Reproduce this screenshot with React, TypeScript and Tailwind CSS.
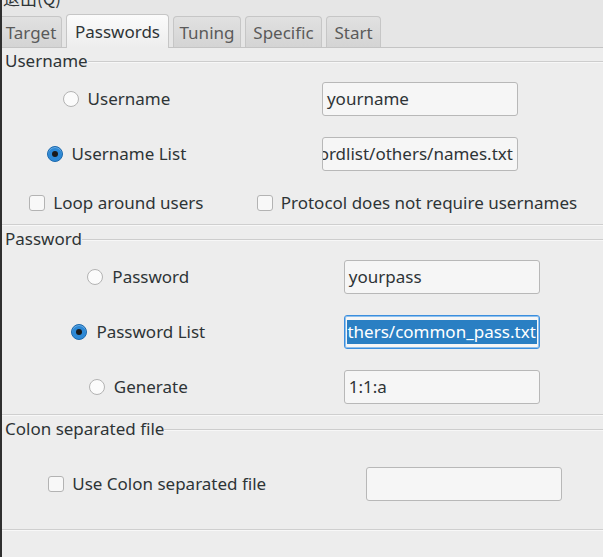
import React from "react";

function Radio({ checked, label }: { checked?: boolean; label: string }) {
  return (
    <div className="flex items-center gap-[9px]">
      {checked ? (
        <span className="w-[16px] h-[16px] rounded-full bg-[#2d89d6] border border-[#1c69ad] flex items-center justify-center shadow-[inset_0_1px_0_rgba(255,255,255,0.3)]">
          <span className="w-[6px] h-[6px] rounded-full bg-[#1a1a1a]" />
        </span>
      ) : (
        <span className="w-[16px] h-[16px] rounded-full bg-[#fbfbfb] border border-[#b3b3b3]" />
      )}
      <span className="text-[#2e3436]">{label}</span>
    </div>
  );
}

function Check({ label }: { label: string }) {
  return (
    <div className="flex items-center gap-[8px]">
      <span className="w-[16px] h-[16px] rounded-[3px] bg-[#f8f8f8] border border-[#b3b3b3]" />
      <span className="text-[#2e3436]">{label}</span>
    </div>
  );
}

function Input({
  value,
  clipLeft,
  selected,
  shift,
}: {
  value?: string;
  clipLeft?: boolean;
  selected?: boolean;
  shift: string;
}) {
  if (selected) {
    return (
      <div
        className={
          "w-[196px] h-[34px] rounded-[3px] border border-[#3b8ede] bg-[#f6f6f6] flex items-center overflow-hidden p-[2px] shadow-[inset_0_0_0_1px_#8fc0ec] " +
          shift
        }
      >
        <div className="h-[24px] w-full bg-[#2a7fc3] flex items-center justify-end overflow-hidden">
          <span className="whitespace-nowrap text-white pr-[1px]">{value}</span>
        </div>
      </div>
    );
  }
  return (
    <div
      className={
        "w-[196px] h-[34px] rounded-[3px] border border-[#b8b8b8] bg-[#f6f6f6] flex items-center overflow-hidden px-[4px] " +
        (clipLeft ? "justify-end " : "justify-start ") +
        shift
      }
    >
      <span className="whitespace-nowrap text-[#2e3436]">{value}</span>
    </div>
  );
}

function Legend({ label }: { label: string }) {
  return (
    <div className="h-[26px] flex items-center">
      <span className="pl-[3px] text-[#2e3436] whitespace-nowrap">{label}</span>
      <div className="flex-1 flex flex-col mt-[2px]">
        <div className="h-px bg-[#cdcdcd]" />
        <div className="h-px bg-[#f7f7f7]" />
      </div>
    </div>
  );
}

function Sep() {
  return (
    <div className="flex flex-col">
      <div className="h-px bg-[#cfcfcf]" />
      <div className="h-px bg-[#f8f8f8]" />
    </div>
  );
}

function Row({ a, b, w1, w2 }: { a: React.ReactNode; b: React.ReactNode; w1: string; w2: string }) {
  return (
    <div className="flex h-[34px] items-center">
      <div className={w1 + " flex justify-center"}>{a}</div>
      <div className={w2 + " flex justify-center"}>{b}</div>
    </div>
  );
}

export default function App() {
  const tabInactive =
    "h-[31px] flex items-center justify-center rounded-t-[4px] border border-b-0 border-[#c6c6c6] bg-gradient-to-b from-[#e1e1e1] to-[#d4d4d4] text-[#5a5a5a]";
  return (
    <div className="w-[603px] h-[557px] flex bg-[#ededed] overflow-hidden font-['Noto_Sans','Noto_Sans_CJK_SC',sans-serif] text-[17px]">
      <div className="w-[2px] h-full bg-[#2f2f2f] shrink-0" />
      <div className="flex-1 flex flex-col overflow-hidden">
        <div className="bg-[#e6e6e6]">
          <div className="h-[14px] overflow-hidden">
            <div className="mt-[-13px] leading-[22px] pl-[1px] text-[#2e3436] font-['Noto_Sans_CJK_SC',sans-serif]">退出(Q)</div>
          </div>
          <div className="h-[34px] flex items-end gap-[4px] border-b border-[#c4c4c4]">
            <div className={tabInactive + " w-[68px] ml-[-8px] pl-[6px] pt-[1px]"}>Target</div>
            <div className="h-[34px] w-[103px] -mb-px flex items-center justify-center rounded-t-[4px] border border-b-0 border-[#c6c6c6] bg-gradient-to-b from-[#fbfbfb] to-[#ededed] text-[#2e3436]">
              Passwords
            </div>
            <div className={tabInactive + " w-[68px] pt-[1px]"}>Tuning</div>
            <div className={tabInactive + " w-[77px] pt-[1px]"}>Specific</div>
            <div className={tabInactive + " w-[55px] pt-[1px]"}>Start</div>
          </div>
        </div>

        {/* Username */}
        <Legend label="Username" />
        <div className="mt-[8px]">
          <Row w1="w-[230px]" w2="w-[374px]" a={<Radio label="Username" />} b={<Input shift="ml-[6px]" value="yourname" />} />
        </div>
        <div className="mt-[21px]">
          <Row
            w1="w-[230px]"
            w2="w-[374px]"
            a={<Radio checked label="Username List" />}
            b={<Input shift="ml-[6px]" clipLeft value="wordlist/others/names.txt" />}
          />
        </div>
        <div className="mt-[15px]">
          <Row
            w1="w-[230px]"
            w2="w-[374px]"
            a={<Check label="Loop around users" />}
            b={<Check label="Protocol does not require usernames" />}
          />
        </div>
        <div className="mt-[4px]">
          <Sep />
        </div>

        {/* Password */}
        <Legend label="Password" />
        <div className="mt-[8px]">
          <Row w1="w-[274px]" w2="w-[330px]" a={<Radio label="Password" />} b={<Input shift="ml-[6px]" value="yourpass" />} />
        </div>
        <div className="mt-[21px]">
          <Row
            w1="w-[274px]"
            w2="w-[330px]"
            a={<Radio checked label="Password List" />}
            b={<Input shift="ml-[6px]" selected value="others/common_pass.txt" />}
          />
        </div>
        <div className="mt-[21px]">
          <Row w1="w-[274px]" w2="w-[330px]" a={<Radio label="Generate" />} b={<Input shift="ml-[6px]" value="1:1:a" />} />
        </div>
        <div className="mt-[10px]">
          <Sep />
        </div>

        {/* Colon */}
        <Legend label="Colon separated file" />
        <div className="mt-[25px]">
          <Row w1="w-[314px]" w2="w-[294px]" a={<Check label="Use Colon separated file" />} b={<Input shift="ml-[12px]" value="" />} />
        </div>
        <div className="mt-[28px]">
          <Sep />
        </div>
      </div>
    </div>
  );
}
